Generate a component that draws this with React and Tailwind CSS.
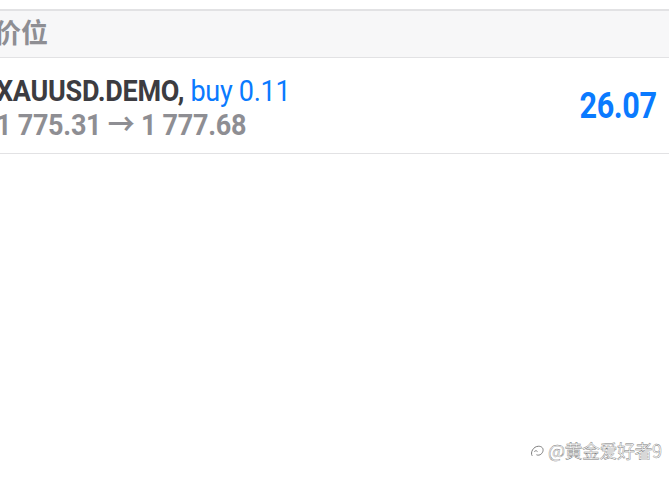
export default function App() {
  return (
    <div className="relative w-[669px] h-[486px] bg-white overflow-hidden" style={{ fontFamily: 'Roboto, "Noto Sans CJK SC", sans-serif' }}>
      <div className="h-[9px]" />
      <div className="h-[49px] bg-[#f7f7f8] border-t-2 border-b border-[#e2e2e4] flex items-center">
        <span className="ml-[-6px] text-[27px] font-bold text-[#8e8e93] leading-none mt-[-6px]" style={{ fontFamily: '"Noto Sans CJK SC", sans-serif' }}>价位</span>
      </div>
      <div className="h-[96px] border-b border-[#e2e2e4] flex items-center justify-between">
        <div className="ml-[-4px] flex flex-col mt-[4px]">
          <div className="text-[30px] leading-[34px] whitespace-nowrap tracking-[-0.3px] origin-left scale-x-[0.9]">
            <span className="font-bold text-[#3c3c41]">XAUUSD.DEMO,</span>
            <span className="text-[#0a7aff]"> buy 0.11</span>
          </div>
          <div className="text-[30px] leading-[34px] font-bold text-[#8e8e93] whitespace-nowrap tracking-[-0.3px] origin-left scale-x-[0.9]">1 775.31 → 1 777.68</div>
        </div>
        <div className="mr-[12px] text-[36px] font-bold text-[#0a7aff] leading-none tracking-[-0.5px] origin-right scale-x-[0.85]">26.07</div>
      </div>
      <div className="absolute left-[529px] top-[441px] flex items-center gap-[2px] text-white text-[18px] leading-none [-webkit-text-stroke:0.4px_#777]" style={{ fontFamily: '"Noto Sans CJK SC", sans-serif' }}>
        <svg width="17" height="17" viewBox="0 0 16 16" fill="none" stroke="#777" strokeWidth="0.9">
          <path d="M3 13c-2-3 1-9 6-9 3 0 5 2 4 5-1 3-4 4-6 3" />
          <path d="M5 9c1-1 2-1 3 0" />
        </svg>
        <span className="tracking-[-0.5px]">@黄金爱好者9</span>
      </div>
    </div>
  );
}
